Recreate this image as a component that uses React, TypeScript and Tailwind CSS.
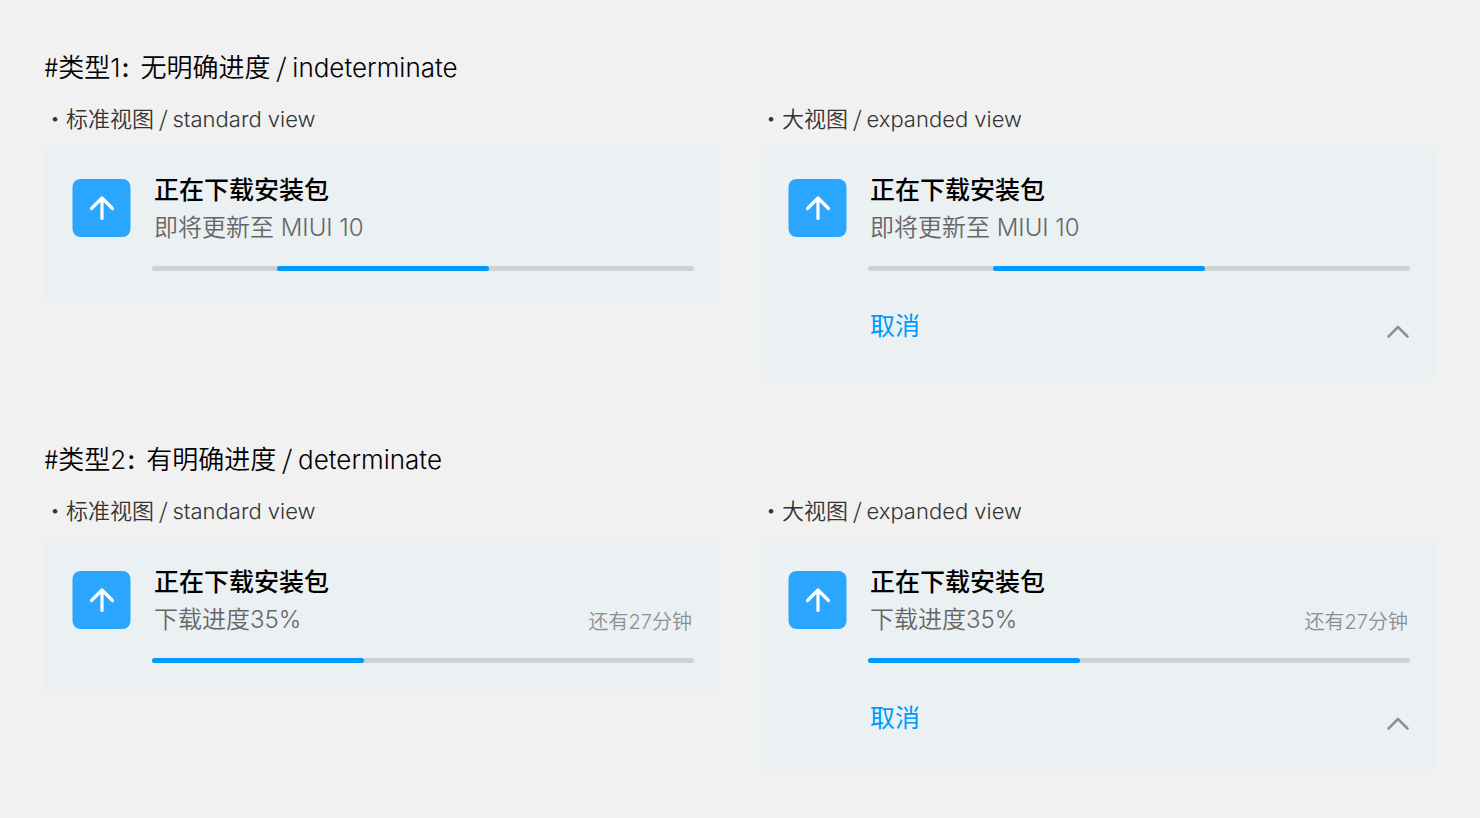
import React from 'react';

interface NotificationProps {
  detail: string;
  remaining?: string;
  start: number;
  length: number;
  percent?: number;
  expanded?: boolean;
}

interface SectionProps {
  index: number;
  title: string;
  name: string;
  notification: NotificationProps;
}

const UpdateIcon: React.FC = () => (
  <svg className="w-[59px] h-[58px] shrink-0" viewBox="0 0 59 58" fill="none" aria-hidden="true">
    <rect x="0.5" width="58" height="58" rx="8" fill="#2aa6ff" />
    <path
      d="M30 39.5V19M19.5 29.5L30 19L40.5 29.5"
      stroke="#fff"
      strokeWidth="3.2"
      strokeLinecap="round"
      strokeLinejoin="round"
    />
  </svg>
);

const ChevronUpIcon: React.FC = () => (
  <svg className="w-6 h-4" viewBox="0 0 24 16" fill="none" aria-hidden="true">
    <path
      d="M2.5 12.5L12 3L21.5 12.5"
      stroke="#8f9394"
      strokeWidth="2.6"
      strokeLinecap="round"
      strokeLinejoin="round"
    />
  </svg>
);

const ProgressBar: React.FC<{ start: number; length: number; percent?: number }> = ({ start, length, percent }) => (
  <div
    role="progressbar"
    aria-label="正在下载安装包"
    aria-valuenow={percent}
    className="mt-[18px] h-[5px] rounded-sm bg-[#cdd3d2]"
  >
    <div
      className="h-full rounded-full bg-[#0099ff]"
      style={{ marginLeft: `${start}%`, width: `${length}%` }}
    />
  </div>
);

const Notification: React.FC<NotificationProps> = ({ detail, remaining, start, length, percent, expanded }) => {
  return (
    <article className="flex gap-[21px] bg-[#ebf0f3] pl-7 pr-[26px] pt-[26px] pb-[31px]">
      <div className="pt-[5px]">
        <UpdateIcon />
      </div>
      <div className="flex-1 min-w-0">
        <h3 className="px-0.5 text-[25px] leading-8 font-medium text-black">正在下载安装包</h3>
        <div className="flex items-center justify-between px-0.5 pt-0.5">
          <p className="text-2xl leading-10 font-[350] text-[#666]">{detail}</p>
          {remaining && <p className="pt-1 text-xl leading-9 font-[350] text-[#8c8f90]">{remaining}</p>}
        </div>
        <ProgressBar start={start} length={length} percent={percent} />
        {expanded && (
          <div className="flex items-end justify-between pt-[37px] pb-1">
            <button type="button" className="px-0.5 text-[25px] leading-9 text-[#0099ff]">
              取消
            </button>
            <button type="button" aria-label="收起" className="pb-1">
              <ChevronUpIcon />
            </button>
          </div>
        )}
      </div>
    </article>
  );
};

const ViewLabel: React.FC<{ title: string; name: string }> = ({ title, name }) => (
  <p className="mb-[11px] text-[22px] leading-9 font-[350] text-[#333] font-['Noto_Sans_CJK_SC',sans-serif]">
    ・{title} / <span className="font-['Inter',sans-serif]">{name}</span>
  </p>
);

const Section: React.FC<SectionProps> = ({ index, title, name, notification }) => {
  return (
    <section>
      <h2 className="mb-[13px] text-[26px] leading-9 font-[350] text-black font-['Noto_Sans_CJK_SC',sans-serif]">
        #类型<span className="font-['Inter',sans-serif]">{index}</span>
        <span className="text-xl font-bold">：</span>
        {title} / <span className="font-['Inter',sans-serif]">{name}</span>
      </h2>
      <div className="grid grid-cols-2 items-start gap-x-10">
        <div>
          <ViewLabel title="标准视图" name="standard view" />
          <Notification {...notification} />
        </div>
        <div>
          <ViewLabel title="大视图" name="expanded view" />
          <Notification {...notification} expanded />
        </div>
      </div>
    </section>
  );
};

const App: React.FC = () => {
  return (
    <main
      lang="zh-CN"
      className="min-h-screen space-y-[61px] bg-[#f1f1f1] px-11 pt-12 pb-11 font-['Inter','Noto_Sans_CJK_SC',sans-serif]"
    >
      <Section
        index={1}
        title="无明确进度"
        name="indeterminate"
        notification={{ detail: '即将更新至 MIUI 10', start: 23.1, length: 39.1 }}
      />
      <Section
        index={2}
        title="有明确进度"
        name="determinate"
        notification={{ detail: '下载进度35%', remaining: '还有27分钟', start: 0, length: 39.1, percent: 35 }}
      />
    </main>
  );
};

export default App;
